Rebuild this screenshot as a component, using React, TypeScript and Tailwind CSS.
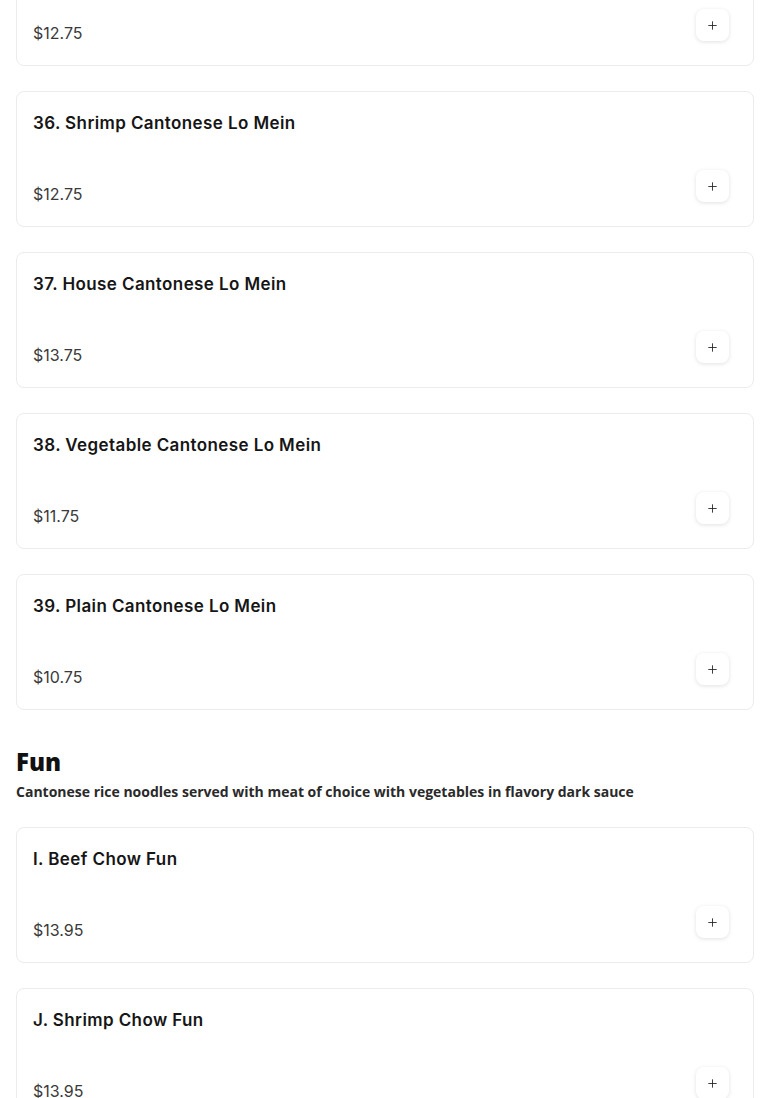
import { Plus } from "lucide-react";

type Item = { name: string; price: string };

const noodles: Item[] = [
  { name: "35. Chicken Cantonese Lo Mein", price: "$12.75" },
  { name: "36. Shrimp Cantonese Lo Mein", price: "$12.75" },
  { name: "37. House Cantonese Lo Mein", price: "$13.75" },
  { name: "38. Vegetable Cantonese Lo Mein", price: "$11.75" },
  { name: "39. Plain Cantonese Lo Mein", price: "$10.75" },
];

const fun: Item[] = [
  { name: "I. Beef Chow Fun", price: "$13.95" },
  { name: "J. Shrimp Chow Fun", price: "$13.95" },
];

function ItemCard({ item }: { item: Item }) {
  return (
    <div className="flex flex-col rounded-lg border border-[#ececec] bg-white pl-4 pr-6 pt-[17px] pb-5">
      <h3 className="text-[17px] font-semibold leading-7 tracking-[0.4px] text-[#161616]">
        {item.name}
      </h3>
      <div className="mt-[33px] flex items-end justify-between">
        <span className="text-[16px] leading-6 text-[#3a3a3a]">{item.price}</span>
        <button className="mb-1 flex h-8 w-[33px] items-center justify-center rounded-lg bg-white shadow-[0_1px_4px_rgba(0,0,0,0.12)]">
          <Plus size={13} strokeWidth={1.6} className="text-[#222]" />
        </button>
      </div>
    </div>
  );
}

export default function App() {
  return (
    <div
      className="h-[1098px] overflow-hidden bg-white"
      style={{ fontFamily: "Inter, 'Liberation Sans', sans-serif" }}
    >
      <div className="-mt-[70px] flex flex-col px-4">
        <div className="flex flex-col gap-[25px]">
          {noodles.map((it) => (
            <ItemCard key={it.name} item={it} />
          ))}
        </div>

        {/* ─── Fun section ─── */}
        <div className="mt-9 mb-[25px]">
          <h2
            className="text-[24px] font-extrabold leading-8 text-[#111]"
            style={{ fontFamily: "'Open Sans', sans-serif" }}
          >
            Fun
          </h2>
          <p
            className="mt-1 text-[14px] font-bold leading-5 text-[#2a2a2a]"
            style={{ fontFamily: "'Open Sans', sans-serif" }}
          >
            Cantonese rice noodles served with meat of choice with vegetables in flavory dark sauce
          </p>
        </div>

        <div className="flex flex-col gap-[25px]">
          {fun.map((it) => (
            <ItemCard key={it.name} item={it} />
          ))}
        </div>
      </div>
    </div>
  );
}
